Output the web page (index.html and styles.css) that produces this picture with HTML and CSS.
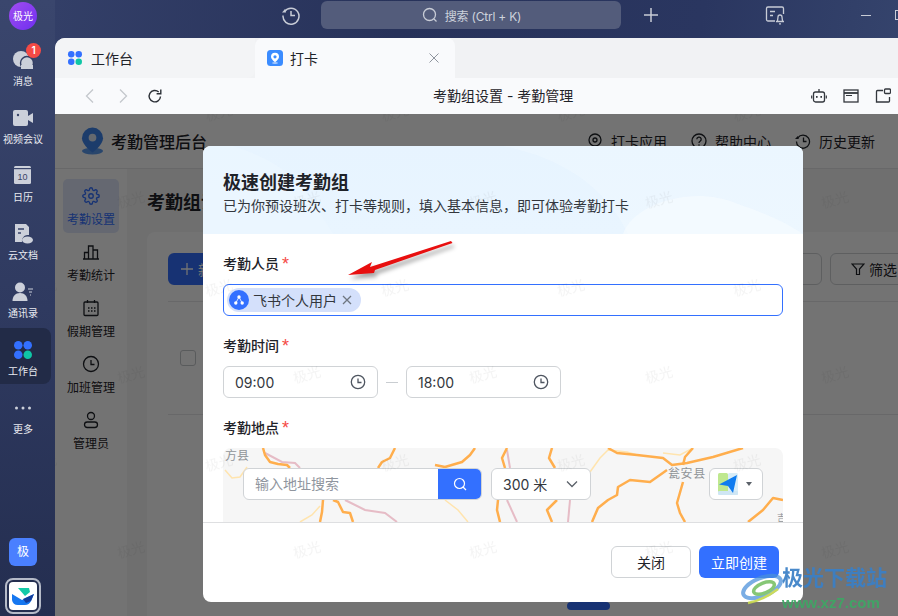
FILE: index.html
```html
<!DOCTYPE html>
<html lang="zh">
<head>
<meta charset="utf-8">
<title>考勤组设置 - 考勤管理</title>
<link rel="stylesheet" href="styles.css">
</head>
<body>
<div class="app">
  <aside class="rail">
    <div class="avatar">极光</div>
    <div class="rail-item">
      <span class="badge">1</span>
      <svg class="rail-icon" viewBox="0 0 22 22"><circle cx="9" cy="10" r="8" fill="#ccd0da"/><circle cx="15" cy="14" r="6.5" fill="#ccd0da" stroke="#333e63" stroke-width="1.4"/><rect x="9" y="16" width="12" height="4" fill="#ccd0da"/></svg>
      <span class="rail-label">消息</span>
    </div>
    <div class="rail-item">
      <svg class="rail-icon" viewBox="0 0 22 22"><rect x="1" y="3" width="15" height="16" rx="2" fill="#ccd0da"/><path d="M16 9l5-3v10l-5-3z" fill="#ccd0da"/><circle cx="6" cy="8" r="1.2" fill="#3a4568"/></svg>
      <span class="rail-label">视频会议</span>
    </div>
    <div class="rail-item">
      <svg class="rail-icon" viewBox="0 0 22 22"><rect x="2" y="1" width="17" height="18" rx="1.5" fill="#ccd0da"/><rect x="2" y="3" width="17" height="1.2" fill="#39446a"/><text x="10.5" y="15" class="cal-num">10</text></svg>
      <span class="rail-label">日历</span>
    </div>
    <div class="rail-item">
      <svg class="rail-icon" viewBox="0 0 22 22"><path d="M3 1h11l3 3v8a6 6 0 0 0-7 7H3z" fill="#ccd0da"/><path d="M6 6h6M6 10h3" stroke="#36416a" stroke-width="1.5"/><ellipse cx="15.5" cy="17" rx="5.5" ry="3.5" fill="#ccd0da"/></svg>
      <span class="rail-label">云文档</span>
    </div>
    <div class="rail-item">
      <svg class="rail-icon" viewBox="0 0 22 22"><circle cx="8" cy="6.5" r="5" fill="#ccd0da"/><path d="M0.500 20c0-5 3-8 7.500-8s7.500 3 7.500 8z" fill="#ccd0da"/><path d="M16 8h5M17 11h3M18 14h1" stroke="#ccd0da" stroke-width="1.100"/></svg>
      <span class="rail-label">通讯录</span>
    </div>
    <div class="rail-item rail-active">
      <svg class="rail-icon" viewBox="0 0 22 22"><rect x="2" y="2" width="8.500" height="8.500" rx="4.250" fill="#3370ff"/><rect x="11.500" y="2" width="8.500" height="8.500" rx="4.250" fill="#3370ff"/><rect x="2" y="11.500" width="8.500" height="8.500" rx="4.250" fill="#3370ff"/><rect x="11.500" y="11.500" width="8.500" height="8.500" rx="4.250" fill="#0fc6a6"/></svg>
      <span class="rail-label">工作台</span>
    </div>
    <div class="rail-item">
      <svg class="rail-icon" viewBox="0 0 22 22"><circle cx="4.500" cy="11" r="1.500" fill="#ccd0da"/><circle cx="11" cy="11" r="1.500" fill="#ccd0da"/><circle cx="17.500" cy="11" r="1.500" fill="#ccd0da"/></svg>
      <span class="rail-label">更多</span>
    </div>
    <div class="rail-foot">
      <div class="org">极</div>
      <div class="app-logo">
        <svg viewBox="0 0 28 28" width="28" height="28"><rect width="28" height="28" rx="4" fill="#fff"/><path d="M9 6h11l1 4-5 4z" fill="#14c9a8"/><path d="M3 12l10 6 12-6-3 7a7 7 0 0 1-6 4H9a6 6 0 0 1-6-5z" fill="#1677f0"/><path d="M14 17l11-5-3 7-5 2z" fill="#123d9c"/></svg>
      </div>
    </div>
  </aside>

  <div class="shell">
    <header class="topbar">
      <svg class="ico-top" viewBox="0 0 20 20"><path d="M3.500 6.500A8 8 0 1 1 2 10.500" fill="none" stroke="#c8ccd6" stroke-width="1.500"/><path d="M1 7.500h4l-1-3.500z" fill="#c8ccd6"/><path d="M10 6v4.500h4" fill="none" stroke="#c8ccd6" stroke-width="1.500"/></svg>
      <div class="search">
        <svg viewBox="0 0 16 16" width="16" height="16"><circle cx="7.500" cy="7.500" r="6" fill="none" stroke="#c8ccd6" stroke-width="1.300"/><path d="M12 12l2.500 2.500" stroke="#c8ccd6" stroke-width="1.300"/></svg>
        <span>搜索 (Ctrl + K)</span>
      </div>
      <svg class="ico-plus" viewBox="0 0 14 14"><path d="M7 0v14M0 7h14" stroke="#c8ccd6" stroke-width="1.500"/></svg>
      <svg class="ico-top ico-bell" viewBox="0 0 20 20"><path d="M10 16H3a1.500 1.500 0 0 1-1.500-1.500v-11A1.500 1.500 0 0 1 3 2h14a1.500 1.500 0 0 1 1.500 1.500V9" fill="none" stroke="#c8ccd6" stroke-width="1.300"/><path d="M5 6.500h5M5 10.500h3" stroke="#c8ccd6" stroke-width="1.300"/><path d="M11 16.500h8M12.500 16l.5-4a2 2 0 0 1 4 0l.5 4M14 18.800h2" fill="none" stroke="#c8ccd6" stroke-width="1.300"/></svg>
      <span class="win-min"></span>
      <span class="win-max"></span>
    </header>

    <div class="tabs">
      <div class="tab tab-idle">
        <svg viewBox="0 0 16 16" width="16" height="16"><rect x="1" y="1" width="6.500" height="6.500" rx="3.200" fill="#3370ff"/><rect x="8.500" y="1" width="6.500" height="6.500" rx="3.200" fill="#3370ff"/><rect x="1" y="8.500" width="6.500" height="6.500" rx="3.200" fill="#3370ff"/><rect x="8.500" y="8.500" width="6.500" height="6.500" rx="3.200" fill="#0fc6a6"/></svg>
        <span>工作台</span>
      </div>
      <div class="tab tab-on">
        <svg viewBox="0 0 16 16" width="16" height="16"><rect width="16" height="16" rx="3.500" fill="#3b8cff"/><path d="M8 2.800a4 4 0 0 0-4 4c0 2.600 4 5.400 4 5.400s4-2.800 4-5.400a4 4 0 0 0-4-4z" fill="#fff"/><circle cx="8" cy="6.800" r="1.600" fill="#3b8cff"/><ellipse cx="8" cy="13" rx="3" ry=".8" fill="#cfe2ff"/></svg>
        <span>打卡</span>
        <svg class="tab-x" viewBox="0 0 10 10" width="10" height="10"><path d="M.5.500l9 9M9.500.500l-9 9" stroke="#8f959e" stroke-width="1"/></svg>
      </div>
      <div class="tab-rest"></div>
    </div>

    <nav class="navbar">
      <svg class="nav-btn" viewBox="0 0 16 16"><path d="M11 1.500L4.500 8l6.500 6.500" fill="none" stroke="#c4c7cc" stroke-width="1.300"/></svg>
      <svg class="nav-btn nav-fwd" viewBox="0 0 16 16"><path d="M5 1.500L11.500 8 5 14.500" fill="none" stroke="#c4c7cc" stroke-width="1.300"/></svg>
      <svg class="nav-btn nav-reload" viewBox="0 0 16 16"><path d="M13.500 8.500a5.700 5.700 0 1 1-1.800-4.500" fill="none" stroke="#2b2f36" stroke-width="1.400"/><path d="M13.800 1.500v4.200H9.600" fill="none" stroke="#2b2f36" stroke-width="1.400"/></svg>
      <span class="nav-title">考勤组设置 - 考勤管理</span>
      <div class="nav-tools">
        <svg viewBox="0 0 16 16" width="16" height="16"><path d="M8 1v3" stroke="#33373d" stroke-width="1.300"/><rect x="2.500" y="4" width="11" height="10" rx="2" fill="none" stroke="#33373d" stroke-width="1.300"/><rect x="5" y="8" width="1.600" height="1.800" fill="#33373d"/><rect x="9.400" y="8" width="1.600" height="1.800" fill="#33373d"/><path d="M.7 7.500v3M15.300 7.500v3" stroke="#33373d" stroke-width="1.200"/></svg>
        <svg viewBox="0 0 16 16" width="16" height="16"><rect x="1" y="2" width="14" height="12" fill="none" stroke="#33373d" stroke-width="1.300"/><path d="M1 5h14" stroke="#33373d" stroke-width="1.800"/><path d="M3 7.500h6" stroke="#33373d" stroke-width="1"/></svg>
        <svg viewBox="0 0 16 16" width="16" height="16"><path d="M8 2.500H2.500a1 1 0 0 0-1 1V14h12a1 1 0 0 0 1-1V9" fill="none" stroke="#33373d" stroke-width="1.300"/><rect x="9.500" y="1" width="6" height="4.500" rx="1" fill="none" stroke="#33373d" stroke-width="1.300"/></svg>
      </div>
    </nav>

    <main class="content">
      <div class="page-head">
        <svg class="brand" viewBox="0 0 24 28" width="23" height="28"><ellipse cx="12" cy="24.500" rx="11" ry="3.500" fill="#5b9bf0"/><path d="M12 0a11 11 0 0 0-11 11c0 7 11 15 11 15s11-8 11-15A11 11 0 0 0 12 0z" fill="#3f86ee"/><circle cx="12" cy="10.500" r="4" fill="#dfe8f5"/></svg>
        <span class="brand-name">考勤管理后台</span>
        <div class="head-links">
          <span class="head-link"><svg viewBox="0 0 16 16" width="16" height="16"><circle cx="8" cy="7" r="6" fill="none" stroke="#1f2329" stroke-width="1.300"/><circle cx="8" cy="7" r="2" fill="none" stroke="#1f2329" stroke-width="1.300"/><path d="M4 14.500h8" stroke="#1f2329" stroke-width="1.300"/></svg>打卡应用</span>
          <span class="head-link"><svg viewBox="0 0 16 16" width="16" height="16"><circle cx="8" cy="8" r="7" fill="none" stroke="#1f2329" stroke-width="1.300"/><path d="M5.800 6.300a2.200 2.200 0 1 1 3.300 1.900c-.8.500-1.100.9-1.100 1.800" fill="none" stroke="#1f2329" stroke-width="1.300"/><circle cx="8" cy="12" r=".8" fill="#1f2329"/></svg>帮助中心</span>
          <span class="head-link"><svg viewBox="0 0 16 16" width="16" height="16"><path d="M2.800 4.800A6.500 6.500 0 1 1 1.500 8.500" fill="none" stroke="#1f2329" stroke-width="1.300"/><path d="M0 6h3.800l-1-3z" fill="#1f2329"/><path d="M8.500 4.500v4h3" fill="none" stroke="#1f2329" stroke-width="1.300"/></svg>历史更新</span>
        </div>
      </div>
      <div class="page-body">
        <ul class="side-nav">
          <li class="side-item side-on"><svg viewBox="0 0 24 24" width="18" height="18"><circle cx="12" cy="12" r="3" fill="none" stroke="#3370ff" stroke-width="1.800"/><path d="M19.400 15a1.650 1.650 0 0 0 .33 1.820l.06.06a2 2 0 0 1 0 2.830 2 2 0 0 1-2.830 0l-.06-.06a1.650 1.650 0 0 0-1.820-.33 1.650 1.650 0 0 0-1 1.510V21a2 2 0 0 1-2 2 2 2 0 0 1-2-2v-.09A1.650 1.650 0 0 0 9 19.400a1.650 1.650 0 0 0-1.820.33l-.06.06a2 2 0 0 1-2.830 0 2 2 0 0 1 0-2.830l.06-.06a1.650 1.650 0 0 0 .33-1.820 1.650 1.650 0 0 0-1.510-1H3a2 2 0 0 1-2-2 2 2 0 0 1 2-2h.09A1.650 1.650 0 0 0 4.600 9a1.650 1.650 0 0 0-.33-1.820l-.06-.06a2 2 0 0 1 0-2.830 2 2 0 0 1 2.830 0l.06.06a1.650 1.650 0 0 0 1.820.33H9a1.650 1.650 0 0 0 1-1.510V3a2 2 0 0 1 2-2 2 2 0 0 1 2 2v.09a1.650 1.650 0 0 0 1 1.510 1.650 1.650 0 0 0 1.820-.33l.06-.06a2 2 0 0 1 2.830 0 2 2 0 0 1 0 2.830l-.06.06a1.650 1.650 0 0 0-.33 1.820V9a1.650 1.650 0 0 0 1.510 1H21a2 2 0 0 1 2 2 2 2 0 0 1-2 2h-.09a1.650 1.650 0 0 0-1.510 1z" fill="none" stroke="#3370ff" stroke-width="1.800"/></svg><span>考勤设置</span></li>
          <li class="side-item"><svg viewBox="0 0 18 18" width="18" height="18"><path d="M1 16h16M2.500 16V9.500h4V16M6.500 16V3h4.500v13M11 16V7h4.500v9" fill="none" stroke="#1f2329" stroke-width="1.300"/></svg><span>考勤统计</span></li>
          <li class="side-item"><svg viewBox="0 0 18 18" width="18" height="18"><rect x="2" y="3" width="14" height="13.500" rx="1" fill="none" stroke="#1f2329" stroke-width="1.300"/><path d="M5.500 1v3M12.500 1v3" stroke="#1f2329" stroke-width="1.300"/><path d="M6 9h1.500M9 9h1.500M12 9h1.500M6 12h1.500M9 12h1.500M12 12h1.500" stroke="#1f2329" stroke-width="1.500"/></svg><span>假期管理</span></li>
          <li class="side-item"><svg viewBox="0 0 18 18" width="18" height="18"><circle cx="9" cy="9" r="7.500" fill="none" stroke="#1f2329" stroke-width="1.300"/><path d="M9 5v4.500h3.500" fill="none" stroke="#1f2329" stroke-width="1.300"/></svg><span>加班管理</span></li>
          <li class="side-item"><svg viewBox="0 0 18 18" width="18" height="18"><circle cx="9" cy="5" r="3.500" fill="none" stroke="#1f2329" stroke-width="1.300"/><rect x="2.500" y="11" width="13" height="5.500" rx="2.700" fill="none" stroke="#1f2329" stroke-width="1.300"/></svg><span>管理员</span></li>
        </ul>
        <section class="main">
          <h1 class="main-title">考勤组设置</h1>
          <div class="card">
            <div class="toolbar">
              <button class="btn-new"><svg viewBox="0 0 12 12" width="12" height="12"><path d="M6 0v12M0 6h12" stroke="#fff" stroke-width="1.300"/></svg>新建</button>
              <span class="tool-blank"></span>
              <span class="btn-filter"><svg viewBox="0 0 14 14" width="14" height="14"><path d="M1 2h12L8.500 7v5.500h-3V7z" fill="none" stroke="#1f2329" stroke-width="1.200"/></svg>筛选</span>
            </div>
            <div class="t-row"><span class="check"></span></div>
            <div class="page-pill"></div>
          </div>
        </section>
      </div>

      <div class="mask">
        <div class="modal">
          <div class="m-head">
            <svg class="m-deco" viewBox="0 0 600 88" preserveAspectRatio="none"><path d="M30 0C90 20 100 40 130 88H0V0z" fill="#f0f8ff" opacity=".35"/><path d="M300 0c50 10 100 35 125 88h175V0z" fill="#f2f9ff" opacity=".4"/><path d="M420 88c10-30 70-50 115-30 30 10 50 20 65 30z" fill="#fafdff" opacity=".5"/></svg>
            <h2 class="m-title">极速创建考勤组</h2>
            <p class="m-sub">已为你预设班次、打卡等规则，填入基本信息，即可体验考勤打卡</p>
          </div>
          <div class="m-body">
            <div class="label">考勤人员<i>*</i></div>
            <div class="people">
              <span class="chip">
                <span class="chip-ico"><svg viewBox="0 0 12 12" width="12" height="12"><circle cx="6" cy="3" r="1.700" fill="#fff"/><circle cx="2.800" cy="9" r="1.700" fill="#fff"/><circle cx="9.200" cy="9" r="1.700" fill="#fff"/><path d="M6 3L2.800 9M6 3l3.200 6" stroke="#fff" stroke-width=".8"/></svg></span>
                飞书个人用户
                <svg class="chip-x" viewBox="0 0 10 10" width="10" height="10"><path d="M1 1l8 8M9 1L1 9" stroke="#6f7680" stroke-width="1.300"/></svg>
              </span>
            </div>
            <div class="label">考勤时间<i>*</i></div>
            <div class="times">
              <div class="time">09:00<svg viewBox="0 0 16 16" width="16" height="16"><circle cx="8" cy="8" r="6.700" fill="none" stroke="#4e5560" stroke-width="1.300"/><path d="M8 4.500V8.500h3.500" fill="none" stroke="#4e5560" stroke-width="1.300"/></svg></div>
              <span class="dash"></span>
              <div class="time">18:00<svg viewBox="0 0 16 16" width="16" height="16"><circle cx="8" cy="8" r="6.700" fill="none" stroke="#4e5560" stroke-width="1.300"/><path d="M8 4.500V8.500h3.500" fill="none" stroke="#4e5560" stroke-width="1.300"/></svg></div>
            </div>
            <div class="label">考勤地点<i>*</i></div>
            <div class="map">
              <svg class="map-svg" viewBox="223 448 560 80" width="560" height="80">
                <g class="pale">
                  <path d="M225 470L232 478 240 477 247 467"/><path d="M468 522L458 510 445 500"/><path d="M590 472L600 458 608 450 627 452 637 455"/><path d="M663 453L680 455 693 448"/><path d="M300 522L312 515 320 506"/>
                </g>
                <g class="rail-line">
                  <path d="M265 453L282 462 295 463 300 468"/><path d="M345 500L365 510 385 513 397 522"/><path d="M507 450L510 468"/><path d="M507 500L517 522"/><path d="M570 500L568 522"/>
                </g>
                <g class="road">
                  <path d="M263 448L265 455 270 462 278 464 287 465 290 468"/>
                  <path d="M333 500L338 502 343 512 350 513 353 522"/>
                  <path d="M323 500L322 512 320 522"/>
                  <path d="M395 448L390 458 382 462 378 468"/>
                  <path d="M435 465L445 467 462 462 470 455 475 448"/>
                  <path d="M507 448L502 458 505 468"/>
                  <path d="M498 500L497 510 500 522"/>
                  <path d="M552 448L549 458 555 468"/>
                  <path d="M557 500L547 510 552 522"/>
                  <path d="M608 448L617 453 637 455 663 458 672 465 687 463 713 457 743 448"/>
                  <path d="M693 448L685 457 683 465"/>
                  <path d="M683 482L677 503 680 513 685 522"/>
                  <path d="M592 522L598 508 608 500 617 495 618 487 630 480 650 482 667 470"/>
                  <path d="M748 522L763 510 773 498 783 500"/>
                </g>
              </svg>
              <span class="place place-a">方县</span>
              <span class="place place-b">瓮安县</span>
              <span class="place place-c">吉</span>
              <div class="map-tools">
                <div class="addr">
                  <span class="addr-text">输入地址搜索</span>
                  <span class="addr-btn"><svg viewBox="0 0 14 14" width="14" height="14"><circle cx="6.500" cy="6.500" r="5" fill="none" stroke="#fff" stroke-width="1.200"/><path d="M10 10l3 3" stroke="#fff" stroke-width="1.200"/></svg></span>
                </div>
                <div class="radius">300 米<svg viewBox="0 0 12 8" width="12" height="8"><path d="M1 1.500L6 6.500l5-5" fill="none" stroke="#5b6169" stroke-width="1.300"/></svg></div>
                <div class="maptype">
                  <svg viewBox="0 0 20 22" width="20" height="22"><rect width="10" height="20" rx="1.500" fill="#bfe88f"/><rect x="10" width="10" height="22" rx="1.500" fill="#d9edf7"/><rect x="0" y="18" width="20" height="4" rx="1" fill="#cfe6f4"/><path d="M1 11.500L19 2l-4 18-5-7z" fill="#0f7cf0"/></svg>
                  <span class="caret"></span>
                </div>
              </div>
            </div>
          </div>
          <div class="m-foot">
            <button class="btn btn-ghost">关闭</button>
            <button class="btn btn-main">立即创建</button>
          </div>
        </div>
      </div>

      <svg class="watermark" width="100%" height="100%">
        <defs>
          <pattern id="wm" width="176" height="175" patternUnits="userSpaceOnUse" patternTransform="translate(120 130)">
            <text x="44" y="49" transform="rotate(-15 44 44)" text-anchor="middle" class="wm-text">极光</text>
            <text x="132" y="136" transform="rotate(-15 132 131)" text-anchor="middle" class="wm-text">极光</text>
          </pattern>
        </defs>
        <rect width="100%" height="100%" fill="url(#wm)"/>
      </svg>
    </main>
  </div>
</div>

<svg class="arrow" viewBox="0 0 120 48" width="120" height="48"><path d="M3 39L27 26 25 31 106 5 107.500 7 30 34 29 37z" fill="#e80f0f"/></svg>

<div class="corner">
  <svg viewBox="0 0 44 40" width="44" height="40"><ellipse cx="22" cy="20" rx="20" ry="9" transform="rotate(-22 22 20)" fill="none" stroke="#4a90d9" stroke-width="4" opacity=".8"/><ellipse cx="24" cy="21" rx="11" ry="5" transform="rotate(-22 24 21)" fill="#fff" stroke="#7cc36a" stroke-width="3.500"/><path d="M8 36c12-2 22-8 30-14" fill="none" stroke="#c8d94f" stroke-width="2.500"/></svg>
  <div class="corner-text">
    <span class="corner-cn">极光下载站</span>
    <span class="corner-en">www.xz7.com</span>
  </div>
</div>
</body>
</html>
```

FILE: styles.css
```css
* { box-sizing: border-box; }
html, body { margin: 0; height: 100%; overflow: hidden; }
body {
  font-family: Inter, "Noto Sans CJK SC", sans-serif;
  color: #1f2329;
  position: relative;
}
.app {
  display: grid;
  grid-template-columns: 55px 1fr;
  height: 100vh;
  background: linear-gradient(100deg, #35416a 0%, #27325a 40%, #2a3660 70%, #3a4a72 100%);
}

/* left rail */
.rail {
  display: flex;
  flex-direction: column;
  background: linear-gradient(180deg, #3a466d 0%, #2f3a60 50%, #242e50 100%);
  height: 100vh;
}
.avatar {
  width: 28px; height: 28px;
  margin: 2px 0 8px 9px;
  border-radius: 50%;
  background: linear-gradient(135deg, #a14df0, #6f2ff0);
  color: #fff;
  font-size: 10px;
  line-height: 28px;
  text-align: center;
  flex: none;
}
.rail-item {
  position: relative;
  width: 51px;
  height: 56px;
  margin-bottom: 2px;
  padding: 11px 5px 0 0;
  display: flex;
  flex-direction: column;
  align-items: center;
  gap: 3px;
  flex: none;
}
.rail-icon { width: 22px; height: 22px; flex: none; }
.rail-label { color: #e8eaf0; font-size: 10px; line-height: 14px; white-space: nowrap; }
.rail-active { background: #222b47; border-radius: 0 8px 8px 0; }
.badge {
  position: absolute;
  left: 26px; top: 5px;
  width: 15px; height: 15px;
  border-radius: 50%;
  background: #f54a45;
  color: #fff;
  font-size: 10px;
  line-height: 15px;
  text-align: center;
  font-weight: 600;
}
.cal-num { font-size: 9px; fill: #3a4568; text-anchor: middle; font-family: "Liberation Sans", sans-serif; }
.rail-foot { margin-top: auto; padding-bottom: 2px; display: flex; flex-direction: column; align-items: center; width: 46px; }
.org {
  width: 28px; height: 28px;
  border-radius: 6px;
  background: #4a80ff;
  color: #fff;
  font-size: 12px;
  line-height: 28px;
  text-align: center;
  margin-bottom: 12px;
}
.app-logo {
  width: 36px; height: 36px;
  padding: 2px;
  border: 2px solid #b6bbc8;
  border-radius: 8px;
  background: #242e50;
}
.app-logo svg { display: block; }

/* window column */
.shell { display: flex; flex-direction: column; min-width: 0; height: 100vh; }
.topbar { height: 38px; flex: none; display: flex; align-items: center; padding-left: 226px; overflow: hidden; padding-bottom: 8px; }
.ico-top { width: 20px; height: 20px; flex: none; }
.search {
  width: 300px; height: 28px;
  margin-left: 20px;
  border-radius: 6px;
  background: #535c7b;
  color: #cdd2dc;
  font-size: 12px;
  letter-spacing: -.2px;
  display: flex;
  align-items: center;
  justify-content: center;
  gap: 7px;
  padding-left: 1px;
  flex: none;
}
.ico-plus { width: 14px; height: 14px; margin-left: 23px; flex: none; }
.ico-bell { margin-left: 107px; }
.win-min { width: 10px; height: 1px; margin-left: 76px; background: #c8ccd6; flex: none; }
.win-max { width: 10px; height: 10px; margin-left: 24px; border: 1px solid #c8ccd6; flex: none; }

.tabs { height: 40px; flex: none; display: flex; background: #f1f2f4; border-radius: 10px 0 0 0; overflow: hidden; }
.tab { width: 200px; display: flex; align-items: center; padding-left: 12px; gap: 8px; font-size: 14px; flex: none; }
.tab-idle { background: #f3f4f6; border-bottom-right-radius: 8px; }
.tab-on { background: #f9fafc; border-radius: 8px 8px 0 0; position: relative; gap: 7px; }
.tab-x { position: absolute; right: 16px; top: 15px; }
.tab-rest { flex: 1; background: #f1f2f4; }

.navbar { height: 36px; flex: none; background: #f9fafc; position: relative; display: flex; align-items: center; padding-left: 27px; }
.nav-btn { width: 16px; height: 16px; flex: none; }
.nav-fwd { margin-left: 17px; }
.nav-reload { margin-left: 16px; }
.nav-title { position: absolute; left: 378px; font-size: 14px; line-height: 20px; top: 8px; white-space: nowrap; }
.nav-tools { margin-left: auto; display: flex; gap: 16px; padding-right: 7px; }

/* underlying page */
.content { flex: 1; position: relative; overflow: hidden; background: #fff; min-height: 0; }
.page-head { height: 55px; display: flex; align-items: center; padding-left: 26px; border-bottom: 1px solid #e6e7e9; }
.brand { flex: none; }
.brand-name { margin-left: 7px; font-size: 16px; font-weight: 500; }
.head-links { margin-left: auto; display: flex; gap: 24px; padding-right: 23px; }
.head-link { display: flex; align-items: center; gap: 8px; font-size: 14px; }
.page-body { display: flex; height: 447px; }
.side-nav { list-style: none; margin: 0; padding: 10px 8px 0; width: 72px; flex: none; display: flex; flex-direction: column; gap: 2px; }
.side-item { height: 54px; padding-top: 8px; display: flex; flex-direction: column; align-items: center; gap: 7px; font-size: 12px; line-height: 16px; border-radius: 5px; white-space: nowrap; }
.side-on { background: #dfe7fb; color: #3370ff; }
.main { flex: 1; min-width: 0; background: #f5f6f7; padding: 21px 0 0 20px; overflow: hidden; }
.main-title { margin: 0 0 16px; font-size: 18px; line-height: 26px; font-weight: 700; white-space: nowrap; }
.card { background: #fff; border-radius: 8px 0 0 0; height: 400px; padding: 21px 0 0 21px; position: relative; }
.toolbar { display: flex; align-items: center; height: 32px; padding-bottom: 0; }
.btn-new { width: 90px; height: 32px; border: 0; border-radius: 6px; background: #3370ff; color: #fff; font: inherit; font-size: 14px; display: flex; align-items: center; gap: 5px; padding-left: 13px; }
.tool-blank { margin-left: auto; width: 100px; height: 32px; border: 1px solid #d0d3d6; border-radius: 6px; }
.btn-filter { width: 92px; height: 32px; margin-left: 8px; margin-right: -24px; border: 1px solid #d0d3d6; border-radius: 6px; display: flex; align-items: center; gap: 4px; padding-left: 20px; font-size: 14px; flex: none; }
.t-row { margin-top: 16px; height: 114px; border-top: 1px solid #e6e7e9; border-bottom: 1px solid #e6e7e9; padding: 48px 0 0 12px; }
.check { display: block; width: 16px; height: 16px; border: 1px solid #c6c9cd; border-radius: 3px; }
.page-pill { position: absolute; left: 420px; top: 370px; width: 43px; height: 8px; background: #3370ff; border-radius: 4px; }

/* modal */
.mask { position: absolute; inset: 0; background: rgba(0,0,0,.55); padding: 32px 0 0 148px; }
.modal { width: 600px; height: 456px; background: #fff; border-radius: 8px; overflow: hidden; display: flex; flex-direction: column; }
.m-head { height: 88px; flex: none; padding: 24px 20px 0; background: linear-gradient(180deg, #e7f4ff, #e9f5ff); position: relative; }
.m-deco { position: absolute; inset: 0; width: 100%; height: 100%; }
.m-title { position: relative; margin: 0; font-size: 18px; line-height: 26px; font-weight: 700; }
.m-sub { position: relative; margin: 0; font-size: 14px; line-height: 20px; color: #33373d; white-space: nowrap; }
.m-body { height: 288px; flex: none; padding: 20px 20px 0; overflow: hidden; }
.label { height: 20px; font-size: 14px; line-height: 20px; font-weight: 500; margin-bottom: 10px; display: flex; }
.label i { color: #f54a45; font-style: normal; margin-left: 3px; font-family: "Liberation Sans", sans-serif; font-size: 18px; line-height: 20px; height: 20px; }
.people { height: 32px; border: 1px solid #3370ff; border-radius: 6px; padding: 3px; margin-bottom: 20px; display: flex; }
.chip { height: 24px; width: 134px; margin-left: 0; background: #d4e0fb; border-radius: 12px; display: flex; align-items: center; font-size: 14px; padding-left: 2px; color: #33373d; white-space: nowrap; }
.chip-ico { width: 20px; height: 20px; border-radius: 50%; background: #3370ff; display: flex; align-items: center; justify-content: center; margin-right: 4px; flex: none; }
.chip-x { margin-left: 5px; }
.times { display: flex; align-items: center; margin-bottom: 20px; }
.time { width: 155px; height: 32px; border: 1px solid #d0d3d6; border-radius: 6px; display: flex; align-items: center; justify-content: space-between; padding: 0 11px; font-size: 14px; color: #33373d; }
.dash { width: 12px; height: 1px; background: #c9cdd1; margin: 0 8px; }
.map { position: relative; width: 560px; height: 80px; background: #f6f6f6; border-radius: 8px 8px 0 0; overflow: hidden; }
.map-svg { display: block; }
.road path { fill: none; stroke: #ffae4d; stroke-width: 2.500; stroke-linejoin: round; }
.pale path { fill: none; stroke: #ffe4ae; stroke-width: 1.500; }
.rail-line path { fill: none; stroke: #e6bcc6; stroke-width: 2; }
.place { position: absolute; font-size: 12px; line-height: 16px; color: #909498; white-space: nowrap; }
.place-a { left: 2px; top: 0; }
.place-b { left: 445px; top: 18px; letter-spacing: .6px; }
.place-c { left: 554px; top: 62px; font-size: 9px; }
.map-tools { position: absolute; left: 20px; top: 20px; display: flex; }
.addr { width: 239px; height: 32px; display: flex; background: #fff; border: 1px solid #d0d3d6; border-radius: 6px; overflow: hidden; }
.addr-text { flex: 1; padding-left: 11px; font-size: 14px; line-height: 30px; color: #8f959e; }
.addr-btn { width: 44px; margin: -1px; background: #3370ff; display: flex; align-items: center; justify-content: center; }
.radius { width: 100px; height: 32px; margin-left: 9px; background: #fff; border: 1px solid #d0d3d6; border-radius: 6px; display: flex; align-items: center; justify-content: space-between; padding: 0 12px 0 11px; font-size: 14px; color: #33373d; }
.maptype { width: 54px; height: 32px; margin-left: 118px; background: #fff; border: 1px solid #d0d3d6; border-radius: 6px; display: flex; align-items: center; padding-left: 8px; gap: 8px; }
.caret { width: 0; height: 0; border-left: 3.500px solid transparent; border-right: 3.500px solid transparent; border-top: 4px solid #5b6169; }
.m-foot { flex: 1; border-top: 1px solid #dedfe1; display: flex; justify-content: flex-end; gap: 8px; padding: 23px 24px 0; }
.btn { width: 80px; height: 32px; border-radius: 6px; font: inherit; font-size: 14px; }
.btn-ghost { background: #fff; border: 1px solid #d0d3d6; color: #1f2329; }
.btn-main { background: #3370ff; border: 0; color: #fff; }

.watermark { position: absolute; inset: 0; pointer-events: none; }
.wm-text { font-size: 14px; fill: rgba(0,0,0,.045); font-family: "Noto Sans CJK SC", sans-serif; }

/* screenshot annotations */
.arrow { position: absolute; left: 345px; top: 236px; filter: drop-shadow(2px 4px 2px rgba(0,0,0,.35)); pointer-events: none; }
.corner { position: absolute; right: 0; bottom: 0; width: 158px; height: 51px; display: flex; align-items: flex-start; opacity: .92; }
.corner svg { flex: none; margin-top: 2px; }
.corner-text { display: flex; flex-direction: column; margin-top: 0; margin-left: -2px; }
.corner-cn { font-size: 21px; line-height: 26px; font-weight: 700; color: #3a7fc6; white-space: nowrap; }
.corner-en { font-family: "Liberation Sans", sans-serif; font-size: 15px; line-height: 20px; font-weight: 700; color: #3da864; white-space: nowrap; margin-top: 2px; }
```
